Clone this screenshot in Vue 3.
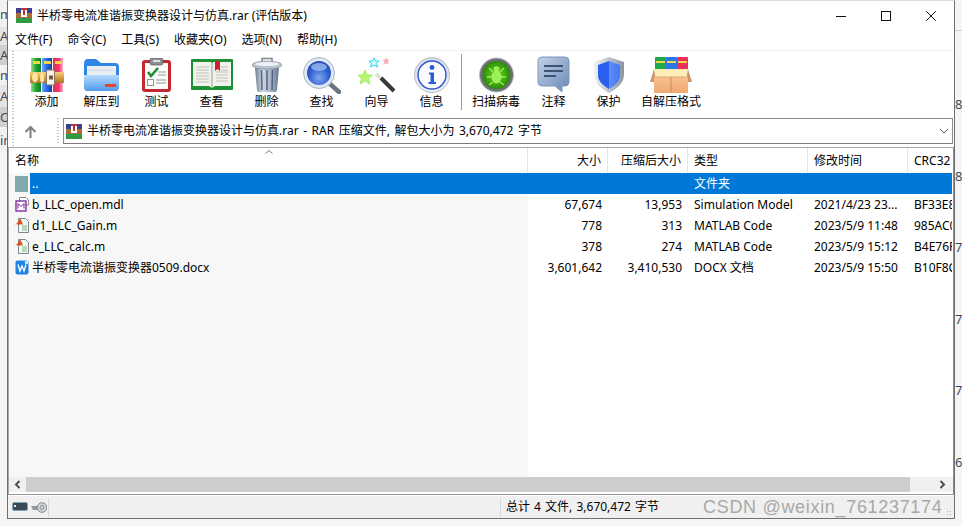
<script setup>
const menus = ['文件(F)', '命令(C)', '工具(S)', '收藏夹(O)', '选项(N)', '帮助(H)']
const leftRows = [
  { t: 'm', c: 'l0', h: 27 }, { t: 'A', c: 'l1', h: 18 }, { t: 'A', c: 'l2', h: 20 }, { t: 'm', c: 'l0', h: 20 },
  { t: 'A', c: 'l1', h: 22 }, { t: 'O', c: 'l2', h: 20 }, { t: 'in', c: 'l0', h: 25 },
]
const rightNums = ['8', '8', '7', '7', '7', '6']
const files = [
  { name: 'b_LLC_open.mdl', kind: 'mdl', size: '67,674', packed: '13,953', type: 'Simulation Model', time: '2021/4/23 23...', crc: 'BF33E8A1' },
  { name: 'd1_LLC_Gain.m', kind: 'm', size: '778', packed: '313', type: 'MATLAB Code', time: '2023/5/9 11:48', crc: '985AC02D' },
  { name: 'e_LLC_calc.m', kind: 'm', size: '378', packed: '274', type: 'MATLAB Code', time: '2023/5/9 15:12', crc: 'B4E76F10' },
  { name: '半桥零电流谐振变换器0509.docx', kind: 'doc', size: '3,601,642', packed: '3,410,530', type: 'DOCX 文档', time: '2023/5/9 15:50', crc: 'B10F8C37' },
]
</script>

<template>
  <div class="desk">
    <div class="strip-left">
      <div v-for="(r, i) in leftRows" :key="i" class="lrow" :class="r.c" :style="{ height: r.h + 'px' }">{{ r.t }}</div>
    </div>

    <div class="win">
      <header class="title">
        <svg class="rar-mini" width="16" height="15" viewBox="0 0 16 15">
          <rect width="16" height="5" fill="#3f3f90"/><rect x="5" width="6" height="5" fill="#c4343c"/>
          <rect y="5" width="16" height="5" fill="#a96c38"/><rect y="10" width="16" height="5" fill="#2f9a44"/>
          <rect x="5" y="2" width="6" height="7" fill="#fff"/><rect x="7" y="2" width="2" height="5" fill="#b9342f"/>
        </svg>
        <span class="title-text">半桥零电流准谐振变换器设计与仿真.rar (评估版本)</span>
        <div class="winbtns">
          <svg width="10" height="10" viewBox="0 0 10 10"><path d="M0 5.500H10" stroke="#111" fill="none"/></svg>
          <svg width="10" height="10" viewBox="0 0 10 10"><rect x=".5" y=".5" width="9" height="9" stroke="#111" fill="none"/></svg>
          <svg width="10" height="10" viewBox="0 0 10 10"><path d="M.3.3 9.7 9.7M9.7.3.3 9.7" stroke="#111" fill="none"/></svg>
        </div>
      </header>

      <nav class="menu"><span v-for="m in menus" :key="m">{{ m }}</span></nav>

      <div class="toolbar">
        <i class="grip"></i>
        <div class="tools">
          <div class="tool">
            <div class="ico">
              <svg width="34" height="34" viewBox="0 0 34 34">
                <defs>
                  <linearGradient id="bg" x1="0" x2="1" y1="0" y2="0"><stop offset="0" stop-color="#8fe08a"/><stop offset=".5" stop-color="#1fa52f"/><stop offset="1" stop-color="#0f7f25"/></linearGradient>
                  <linearGradient id="bb" x1="0" x2="1" y1="0" y2="0"><stop offset="0" stop-color="#6ea6ff"/><stop offset=".5" stop-color="#2468e0"/><stop offset="1" stop-color="#123fa8"/></linearGradient>
                  <linearGradient id="br" x1="0" x2="1" y1="0" y2="0"><stop offset="0" stop-color="#e03050"/><stop offset=".6" stop-color="#f0386e"/><stop offset="1" stop-color="#ffb0c8"/></linearGradient>
                  <linearGradient id="belt" x1="0" x2="0" y1="0" y2="1"><stop offset="0" stop-color="#f7cf7c"/><stop offset=".5" stop-color="#dba044"/><stop offset="1" stop-color="#a8732c"/></linearGradient>
                </defs>
                <rect x="1" y="0" width="10" height="34" fill="url(#bg)"/>
                <rect x="12" y="0" width="10" height="34" fill="url(#bb)"/>
                <rect x="23" y="0" width="10" height="34" fill="url(#br)"/>
                <rect x="3" y="3" width="7" height="3" fill="#f2d54a"/><rect x="14" y="3" width="7" height="3" fill="#f2d54a"/><rect x="25" y="3" width="7" height="3" fill="#f2d54a"/>
                <rect x="0" y="14" width="34" height="11" rx="1" fill="url(#belt)"/>
                <ellipse cx="5" cy="19.5" rx="3" ry="5" fill="#ffe39a"/>
                <ellipse cx="12" cy="19.5" rx="2" ry="5" fill="#ffe39a"/>
                <rect x="16.5" y="12" width="8" height="15" rx="1" fill="#f6f2ea" stroke="#8a7a64"/>
                <rect x="19" y="17.5" width="4" height="4" fill="#7a5a34"/>
              </svg>
            </div>
            <span>添加</span>
          </div>
          <div class="tool">
            <div class="ico">
              <svg width="37" height="34" viewBox="0 0 37 34">
                <defs><linearGradient id="ff" x1="0" x2="0" y1="0" y2="1"><stop offset="0" stop-color="#b6dcfb"/><stop offset="1" stop-color="#4f9bec"/></linearGradient></defs>
                <path d="M1 6Q1 1 5 1H13L18 5H32Q36 5 36 9V28Q36 33 32 33H5Q1 33 1 28Z" fill="#2f86e6"/>
                <rect x="4" y="8" width="29" height="12" fill="#e8eef4"/>
                <path d="M6 12H31" stroke="#a9b8c6" stroke-dasharray="1 1.5"/>
                <path d="M1 17H36V29Q36 33 32 33H5Q1 33 1 29Z" fill="url(#ff)"/>
                <rect x="22" y="26" width="11" height="3" fill="#e8432c"/>
              </svg>
            </div>
            <span>解压到</span>
          </div>
          <div class="tool">
            <div class="ico">
              <svg width="29" height="34" viewBox="0 0 29 34">
                <rect x="0" y="2" width="29" height="32" rx="3" fill="#c4282e"/>
                <rect x="3" y="5" width="23" height="26" fill="#fbfbf8"/>
                <rect x="8" y="0" width="13" height="7" rx="2" fill="#8d8f92" stroke="#585a5e" stroke-width=".7"/>
                <rect x="11" y="2" width="7" height="2" fill="#e2e2e2"/>
                <path d="M6 14 9 18 16 10" stroke="#1e8e2e" stroke-width="2.6" fill="none"/>
                <path d="M16 14H24M16 17H24M14 22H24M14 25H24" stroke="#8d99a0"/>
                <rect x="5.5" y="21.5" width="6" height="6" fill="none" stroke="#8d99a0"/>
              </svg>
            </div>
            <span>测试</span>
          </div>
          <div class="tool">
            <div class="ico">
              <svg width="42" height="32" viewBox="0 0 42 32">
                <rect x="0" y="0" width="42" height="31" rx="1" fill="#1f8f36"/>
                <path d="M2 3H20L21 5 22 3H40V27H24L21 29 18 27H2Z" fill="#f2f2ec"/>
                <path d="M21 5V29" stroke="#9c9c96"/>
                <path d="M5 8H18M5 11H18M5 14H18M5 17H18M5 20H18M5 23H18M25 13H37M25 16H37M25 19H37M25 22H37M30 8H37M30 11H37" stroke="#c0c0b8"/>
                <path d="M24 2H29V12L26.5 10 24 12Z" fill="#cc2030"/>
              </svg>
            </div>
            <span>查看</span>
          </div>
          <div class="tool">
            <div class="ico">
              <svg width="30" height="36" viewBox="0 0 30 36">
                <defs><linearGradient id="tc" x1="0" x2="1" y1="0" y2="0"><stop offset="0" stop-color="#6d7d92"/><stop offset=".3" stop-color="#cdd6e2"/><stop offset=".65" stop-color="#a7b5c8"/><stop offset="1" stop-color="#66768c"/></linearGradient></defs>
                <path d="M10 5V1.5H20V5" stroke="#7e8692" stroke-width="1.5" fill="none"/>
                <path d="M3 11H27L25 33Q25 35 23 35H7Q5 35 5 33Z" fill="url(#tc)"/>
                <path d="M9.5 13 10 33M15 13V33M20.500 13 20 33" stroke="#56667c" stroke-width="1.5"/>
                <ellipse cx="15" cy="8" rx="15" ry="4" fill="#b9c3cf" stroke="#7c8798" stroke-width=".6"/>
                <ellipse cx="15" cy="7" rx="12" ry="2" fill="#edf0f4"/>
              </svg>
            </div>
            <span>删除</span>
          </div>
          <div class="tool">
            <div class="ico">
              <svg width="38" height="37" viewBox="0 0 38 37">
                <defs><radialGradient id="lens" cx=".5" cy=".7" r=".7"><stop offset="0" stop-color="#7fa8f0"/><stop offset=".6" stop-color="#2f5fd0"/><stop offset="1" stop-color="#2048b0"/></radialGradient></defs>
                <path d="M26 26 36 35" stroke="#6e7780" stroke-width="4.500" stroke-linecap="round"/>
                <circle cx="16" cy="16" r="15.500" fill="#dfe8f3" stroke="#aab8c8"/>
                <circle cx="16" cy="16" r="12" fill="url(#lens)"/>
                <ellipse cx="16" cy="10" rx="8" ry="4" fill="#9ab9ef" opacity=".8"/>
              </svg>
            </div>
            <span>查找</span>
          </div>
          <div class="tool">
            <div class="ico">
              <svg width="38" height="36" viewBox="0 0 38 36">
                <polygon points="7,13 9,18 14.500,18 10.500,21.500 12,27 7,24 2,27 3.500,21.500 0,18 5,18" fill="#b8f86e" stroke="#7fe63a" stroke-width=".6"/>
                <polygon points="16,1 17.500,4 21,4 18.500,6.500 19.500,10 16,8 12.500,10 13.500,6.500 11,4 14.500,4" fill="#d6fbff" stroke="#26d6ec"/>
                <polygon points="28,1 29,3 31,3.200 29.500,4.700 30,7 28,6 26,7 26.500,4.700 25,3.200 27,3" fill="#f9b0b8" stroke="#f09aa4" stroke-width=".5"/>
                <path d="M18 17 24 22" stroke="#e0e0e0" stroke-width="4"/>
                <path d="M23 21 36 34" stroke="#3a3a3a" stroke-width="4"/>
              </svg>
            </div>
            <span>向导</span>
          </div>
          <div class="tool">
            <div class="ico">
              <svg width="36" height="36" viewBox="0 0 36 36">
                <defs><linearGradient id="ir" x1="0" x2="0" y1="0" y2="1"><stop offset="0" stop-color="#d4dbe8"/><stop offset="1" stop-color="#eef1f6"/></linearGradient></defs>
                <circle cx="18" cy="18" r="17.500" fill="url(#ir)" stroke="#b5bdca"/>
                <circle cx="18" cy="18" r="14" fill="#fbfcff" stroke="#2b55c8" stroke-width="1.400"/>
                <circle cx="18" cy="10.500" r="2.400" fill="#2a5bd8"/>
                <path d="M15 15.500H20V25H22V27H14.500V25H16.500V17.500H15Z" fill="#2a5bd8"/>
              </svg>
            </div>
            <span>信息</span>
          </div>
          <i class="tsep"></i>
          <div class="tool w60">
            <div class="ico">
              <svg width="35" height="36" viewBox="0 0 35 36">
                <defs><radialGradient id="sc" cx=".5" cy=".5" r=".5"><stop offset="0" stop-color="#6fe020"/><stop offset="1" stop-color="#2a8a08"/></radialGradient></defs>
                <circle cx="17.500" cy="18" r="17" fill="#6d7074" stroke="#b8bcc0"/>
                <circle cx="17.500" cy="18" r="14" fill="url(#sc)"/>
                <ellipse cx="17.500" cy="20" rx="5" ry="6.500" fill="#9cf05a"/>
                <circle cx="17.500" cy="12" r="2.800" fill="#9cf05a"/>
                <path d="M10 11 14 15M25 11 21 15M8 20H13M27 20H22M10 28 14 25M25 28 21 25" stroke="#9cf05a" stroke-width="1.300"/>
              </svg>
            </div>
            <span>扫描病毒</span>
          </div>
          <div class="tool">
            <div class="ico">
              <svg width="33" height="38" viewBox="0 0 33 38">
                <defs><linearGradient id="cm" x1="0" x2="1" y1="0" y2="1"><stop offset="0" stop-color="#c4d2e6"/><stop offset="1" stop-color="#6888b8"/></linearGradient></defs>
                <path d="M5 1H28Q32 1 32 5V26Q32 30 28 30H25V36L18 30H5Q1 30 1 26V5Q1 1 5 1Z" fill="url(#cm)" stroke="#7f96ba"/>
                <path d="M7 10H26M7 15H26M7 20H19" stroke="#3e5272" stroke-width="2"/>
              </svg>
            </div>
            <span>注释</span>
          </div>
          <div class="tool">
            <div class="ico">
              <svg width="30" height="36" viewBox="0 0 30 36">
                <defs>
                  <linearGradient id="sh" x1="0" x2="1" y1="0" y2="0"><stop offset="0" stop-color="#f1f3f6"/><stop offset="1" stop-color="#8994a4"/></linearGradient>
                  <linearGradient id="sb" x1="0" x2="1" y1="0" y2="0"><stop offset="0" stop-color="#2a5ff0"/><stop offset=".5" stop-color="#2a5ff0"/><stop offset=".5" stop-color="#5d8ef8"/><stop offset="1" stop-color="#4578f2"/></linearGradient>
                </defs>
                <path d="M15 0 30 5V17C30 27 22 32 15 36 8 32 0 27 0 17V5Z" fill="url(#sh)"/>
                <path d="M15 4 26 8V18C26 25 20 29 15 32 10 29 4 25 4 18V8Z" fill="url(#sb)"/>
              </svg>
            </div>
            <span>保护</span>
          </div>
          <div class="tool w70">
            <div class="ico">
              <svg width="42" height="36" viewBox="0 0 42 36">
                <defs><linearGradient id="bx" x1="0" x2="0" y1="0" y2="1"><stop offset="0" stop-color="#f7c08e"/><stop offset="1" stop-color="#f0a974"/></linearGradient></defs>
                <rect x="5" y="0" width="11" height="14" rx="1" fill="#1fa84a"/><rect x="16" y="0" width="11" height="14" rx="1" fill="#2a78e8"/><rect x="27" y="0" width="11" height="14" rx="1" fill="#ec2e58"/>
                <rect x="6" y="4" width="9" height="2" fill="#f2d54a"/><rect x="17" y="4" width="9" height="2" fill="#f2d54a"/><rect x="28" y="4" width="9" height="2" fill="#f2d54a"/>
                <path d="M4 12H38V20H4Z" fill="#fdeeb8"/>
                <path d="M4 12 0 25H5V18ZM38 12 42 25H37V18Z" fill="#c89670"/>
                <rect x="4" y="20" width="34" height="16" fill="url(#bx)"/>
                <path d="M4 20H38" stroke="#e2a878"/><path d="M21 20V36" stroke="#c88c60"/>
              </svg>
            </div>
            <span>自解压格式</span>
          </div>
        </div>
      </div>

      <div class="addr">
        <i class="grip"></i>
        <svg class="up" width="13" height="13" viewBox="0 0 13 13"><path d="M6.500 13V2M1.500 7 6.500 2 11.500 7" stroke="#7f7f7f" stroke-width="2" fill="none"/></svg>
        <i class="grip grip2"></i>
        <div class="field">
          <svg class="rar-mini" width="16" height="15" viewBox="0 0 16 15">
            <rect width="16" height="5" fill="#3f3f90"/><rect x="5" width="6" height="5" fill="#c4343c"/>
            <rect y="5" width="16" height="5" fill="#a96c38"/><rect y="10" width="16" height="5" fill="#2f9a44"/>
            <rect x="5" y="2" width="6" height="7" fill="#fff"/><rect x="7" y="2" width="2" height="5" fill="#b9342f"/>
          </svg>
          <span class="field-text">半桥零电流准谐振变换器设计与仿真.rar - RAR 压缩文件, 解包大小为 3,670,472 字节</span>
          <svg class="chev" width="10" height="6" viewBox="0 0 10 6"><path d="M1 1 5 5 9 1" stroke="#606060" fill="none"/></svg>
        </div>
      </div>

      <div class="list">
        <div class="head">
          <div class="hc hname">名称<svg class="sort" width="8" height="4" viewBox="0 0 8 4"><path d="M.5 3.500 4 .5 7.500 3.500" stroke="#777" fill="none"/></svg></div>
          <div class="hc hnum">大小</div>
          <div class="hc hnum">压缩后大小</div>
          <div class="hc">类型</div>
          <div class="hc">修改时间</div>
          <div class="hc hlast">CRC32</div>
        </div>

        <div class="body">
          <div class="row">
            <div class="fico"><i class="updir"></i></div>
            <div class="cells sel">
              <div class="c cname">..</div><div class="c cnum"></div><div class="c cnum"></div>
              <div class="c">文件夹</div><div class="c"></div><div class="c"></div>
            </div>
          </div>
          <div v-for="f in files" :key="f.name" class="row">
            <div class="fico">
              <svg v-if="f.kind === 'mdl'" width="15" height="15" viewBox="0 0 15 15">
                <path d="M4.500.5H11L13.500 3V8H4.500Z" fill="#fff" stroke="#8a8a8a"/>
                <rect x="1" y="4" width="10" height="10" fill="#fff" stroke="#7a1f96" stroke-width="1.300"/>
                <path d="M3 11.500V6.500L6 9.500 9 6.500V11.500" stroke="#7a1f96" fill="none"/>
              </svg>
              <svg v-else-if="f.kind === 'm'" width="15" height="15" viewBox="0 0 15 15">
                <path d="M3.500.5H10.500L13.500 3.500V14.500H3.500Z" fill="#f2f8f2" stroke="#7c8a90"/>
                <path d="M7 8H12M7 10H12M7 12H12" stroke="#7fb88a"/>
                <path d="M0 7 3 4 5 0 7 4 8 7 6 6 4 7 2 6Z" fill="#e0501c"/>
              </svg>
              <svg v-else width="14" height="15" viewBox="0 0 14 15">
                <rect x=".5" y=".5" width="13" height="14" rx="2" fill="#1f84e4"/>
                <rect x="10" y="1" width="3" height="3" fill="#cfe6fb"/>
                <path d="M3 4.500 5 11 7 6 9 11 11 4.500" stroke="#fff" stroke-width="1.300" fill="none"/>
              </svg>
            </div>
            <div class="cells">
              <div class="c cname">{{ f.name }}</div>
              <div class="c cnum">{{ f.size }}</div>
              <div class="c cnum">{{ f.packed }}</div>
              <div class="c">{{ f.type }}</div>
              <div class="c">{{ f.time }}</div>
              <div class="c">{{ f.crc }}</div>
            </div>
          </div>
        </div>

        <div class="hscroll">
          <div class="sbtn"><svg width="7" height="9" viewBox="0 0 7 9"><path d="M5.500 1 2 4.500 5.500 8" stroke="#505050" stroke-width="2" fill="none"/></svg></div>
          <div class="thumb"></div>
          <div class="sbtn rbtn"><svg width="7" height="9" viewBox="0 0 7 9"><path d="M1.500 1 5 4.500 1.500 8" stroke="#505050" stroke-width="2" fill="none"/></svg></div>
        </div>
      </div>

      <footer class="status">
        <div class="st-icons">
          <svg width="16" height="10" viewBox="0 0 16 10">
            <rect x=".5" y=".5" width="15" height="8" rx="1.500" fill="#3e4a52" stroke="#7fa6c4"/>
            <rect x="2" y="3" width="2" height="2" fill="#e8e8e8"/>
          </svg>
          <svg width="16" height="11" viewBox="0 0 16 11">
            <path d="M0 4H8V8H2Z" fill="#8f9aa0"/>
            <circle cx="11" cy="5.500" r="4.800" fill="#d6d6d6" stroke="#80868a"/>
            <circle cx="11" cy="5.500" r="2" fill="none" stroke="#80868a"/>
          </svg>
        </div>
        <div class="st-panel"></div>
        <div class="st-total">总计 4 文件, 3,670,472 字节</div>
        <div class="mark">CSDN @weixin_761237174</div>
        <i class="rsz"></i>
      </footer>
    </div>

    <div class="strip-right">
      <div class="rline"></div>
      <div class="nums"><span v-for="(n, i) in rightNums" :key="i">{{ n }}</span></div>
    </div>
  </div>
</template>

<style>
html, body { margin: 0; background: #f5f5f5; overflow: hidden; }
</style>

<style scoped>
.desk {
  width: 962px; height: 526px; display: flex; align-items: flex-start; overflow: hidden;
  font: 12px/16px "Noto Sans", "Noto Sans CJK SC", sans-serif; color: #000;
}
.strip-left { width: 7px; flex: none; overflow: hidden; color: #4a4a55; font-size: 13px; }
.lrow { display: flex; align-items: center; white-space: nowrap; }
.l0 { background: #f1f1f1; }
.l1 { background: #e4e4e4; }
.l2 { background: #cfcfcf; }

.win {
  width: 948px; height: 519px; box-sizing: border-box; flex: none; display: flex; flex-direction: column;
  background: #fff; border: 1px solid #707070; border-top-color: #dcdcdc;
}
.title { height: 27px; box-sizing: border-box; padding: 2px 0 0 8px; display: flex; align-items: center; flex: none; }
.title-text { margin-left: 5px; }
.rar-mini { flex: none; }
.winbtns { margin-left: auto; display: flex; gap: 35px; padding-right: 18px; }
.menu { height: 22px; box-sizing: border-box; padding: 2px 0 0 7px; display: flex; gap: 15px; align-items: center; flex: none; }

.toolbar {
  height: 68px; flex: none; display: flex; border-top: 1px solid #efefef; box-sizing: border-box; padding-left: 4px;
}
.grip {
  display: block; width: 2px; flex: none;
  background-image: linear-gradient(#c4c4c4 50%, transparent 50%); background-size: 2px 3px;
}
.tools { display: flex; margin-left: 4px; padding-left: 1px; }
.tool { width: 55px; display: flex; flex-direction: column; align-items: center; padding-top: 5px; box-sizing: border-box; flex: none; }
.w60 { width: 60px; }
.w70 { width: 70px; }
.ico { height: 38px; display: flex; align-items: center; justify-content: center; }
.tsep { width: 1px; height: 56px; margin: 3px 4px 0 2px; background: #9a9a9a; flex: none; }

.addr { height: 29px; flex: none; display: flex; padding-left: 4px; box-sizing: border-box; align-items: stretch; }
.up { align-self: center; margin: -3px 0 0 10px; flex: none; }
.grip2 { margin-left: 20px; height: 26px; }
.field {
  margin-left: 4px; width: 890px; height: 26px; box-sizing: border-box; border: 1px solid #8a8a8a; border-bottom-color: #7a7a7a;
  display: flex; align-items: center; padding-left: 2px;
}
.field-text { margin-left: 5px; word-spacing: 1.4px; }
.chev { margin-left: auto; margin-right: 3px; }

.list {
  flex: none; display: flex; flex-direction: column; border-top: 1px solid #a8a8a8; border-bottom: 1px solid #9a9a9a;
  border-left: 1px solid #a8a8a8; border-right: 1px solid #8a8a8a; margin-bottom: 1px;
}
.head { height: 25px; flex: none; display: grid; grid-template-columns: 519px 80px 80px 120px 100px 44px; }
.hc { padding: 5px 0 0 6px; border-right: 1px solid #e5e5e5; position: relative; white-space: nowrap; overflow: hidden; }
.hname { padding-left: 6px; }
.hnum { text-align: right; padding: 5px 6px 0 0; }
.hlast { border-right: 0; }
.sort { position: absolute; left: 256px; top: 2px; }

.body { height: 304px; flex: none; background: linear-gradient(90deg, #f7f7f7 519px, #fff 519px); }
.row { height: 21px; display: flex; }
.fico { width: 21px; flex: none; display: flex; align-items: center; padding-left: 6px; box-sizing: border-box; }
.updir { display: block; width: 13px; height: 16px; background: #7fa9ad; }
.cells { display: grid; grid-template-columns: 498px 80px 80px 120px 100px 44px; height: 21px; }
.sel { background: #0078d7; color: #fff; }
.c { padding-left: 6px; line-height: 21px; white-space: nowrap; overflow: hidden; }
.cname { padding-left: 2px; }
.cnum { padding: 0 6px 0 0; text-align: right; }

.hscroll { height: 15px; flex: none; display: flex; background: #f0f0f0; margin-bottom: 2px; }
.sbtn { width: 17px; display: flex; align-items: center; justify-content: center; flex: none; }
.thumb { width: 884px; background: #cdcdcd; flex: none; }
.rbtn { margin-left: auto; width: 43px; justify-content: flex-end; padding-right: 7px; box-sizing: border-box; }

.status { flex: 1; min-height: 0; background: #f0f0f0; display: flex; align-items: center; position: relative; white-space: nowrap; }
.st-icons { width: 41px; height: 19px; display: flex; align-items: center; gap: 3px; padding-left: 4px; border-right: 1px solid #d8d8d8; flex: none; box-sizing: border-box; }
.st-panel { width: 452px; height: 19px; border-right: 1px solid #d8d8d8; flex: none; box-sizing: border-box; }
.st-total { margin-left: 5px; word-spacing: 1px; flex: none; }
.mark { font: 18px/20px "Liberation Sans", sans-serif; color: #a8a8a8; margin-left: 44px; letter-spacing: .68px; }
.rsz {
  position: absolute; right: 1px; bottom: 1px; width: 7px; height: 7px;
  background-image: radial-gradient(circle, #b0b0b0 1px, transparent 1px); background-size: 3px 3px;
}

.strip-right { width: 7px; flex: none; overflow: hidden; color: #3e4a5a; font-size: 13px; height: 526px; }
.rline { height: 1px; margin-top: 30px; background: #d0d0d0; }
.nums { display: flex; flex-direction: column; gap: 55.5px; padding-top: 65px; }
.nums span { line-height: 16px; }
</style>
